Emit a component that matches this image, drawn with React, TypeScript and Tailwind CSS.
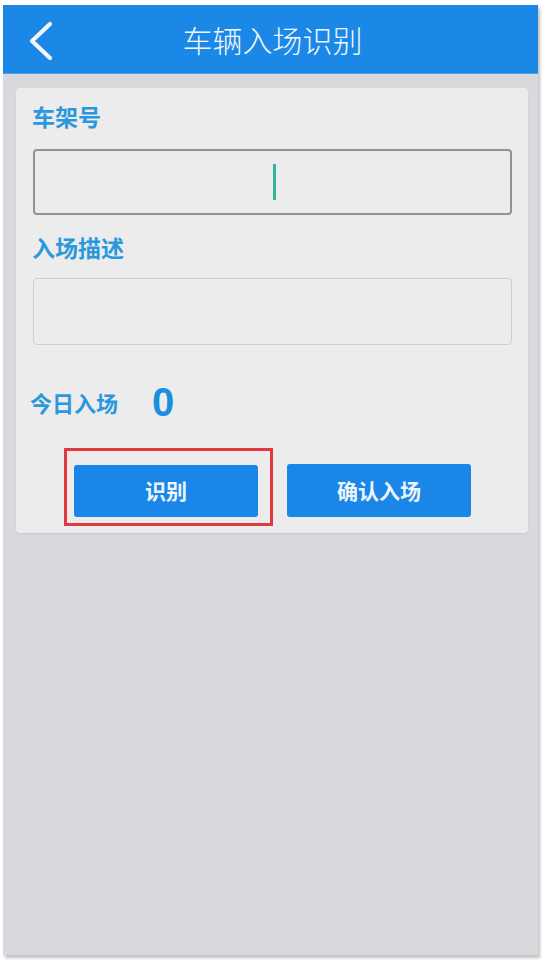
const font = { fontFamily: '"Noto Sans CJK SC", "Noto Sans", sans-serif' };

const App = () => {
  return (
    <div className="w-[546px] h-[964px] bg-white pt-[5px] pl-[3px]" style={font}>
      <div className="w-[535px] h-[950px] bg-[#d9d9dd] flex flex-col shadow-[2px_3px_3px_rgba(0,0,0,0.25)]">
        {/* header */}
        <div className="h-[69px] bg-[#1b87e6] flex items-center relative border-b border-[#4f9fe6]">
          <svg className="absolute left-[24px] top-[15px]" width="30" height="42" viewBox="0 0 30 42" fill="none">
            <polyline points="23,4 5,21 23,38" stroke="#f4f8fc" strokeWidth="4.2" strokeLinecap="round" strokeLinejoin="round" />
          </svg>
          <div className="flex-1 text-center text-[#f3f7fb] text-[30px] font-light pl-[4px]">车辆入场识别</div>
        </div>

        {/* form card */}
        <div className="ml-[13px] mt-[14px] w-[512px] h-[445px] bg-[#ececec] rounded-[4px] px-[17px] pt-[13px] flex flex-col shadow-[0_1px_2px_rgba(0,0,0,0.08)]">
          <div className="text-[#2b98dd] text-[23px] font-bold leading-[30px] -ml-[1px]">车架号</div>
          <div className="mt-[18px] h-[66px] w-[479px] rounded-[4px] border-2 border-[#8d9399] flex items-center justify-center">
            <div className="w-[3px] h-[36px] bg-[#2fb59a] ml-[3px]" />
          </div>
          <div className="mt-[17px] text-[#2b98dd] text-[23px] font-bold leading-[30px] -ml-[1px]">入场描述</div>
          <div className="mt-[16px] h-[67px] w-[479px] rounded-[4px] border border-[#cfcfcf]" />

          <div className="mt-[37px] flex items-center -ml-[3px]">
            <span className="text-[#2b98dd] text-[22px] font-bold">今日入场</span>
            <span className="ml-[34px] text-[#1b8ee0] text-[40px] font-bold leading-none" style={{ fontFamily: '"Liberation Sans", Arial, sans-serif' }}>0</span>
          </div>

          <div className="mt-[26px] flex items-start">
            <div className="ml-[31px] w-[209px] h-[78px] border-[3px] border-[#e23a3c] pl-[7px] pt-[14px]">
              <button className="w-[184px] h-[52px] bg-[#1a86e8] rounded-[3px] text-[#eef4fb] text-[21px] font-bold">识别</button>
            </div>
            <button className="ml-[14px] mt-[16px] w-[184px] h-[53px] bg-[#1a86e8] rounded-[3px] text-[#eef4fb] text-[21px] font-bold">确认入场</button>
          </div>
        </div>
      </div>
    </div>
  );
};

export default App;
